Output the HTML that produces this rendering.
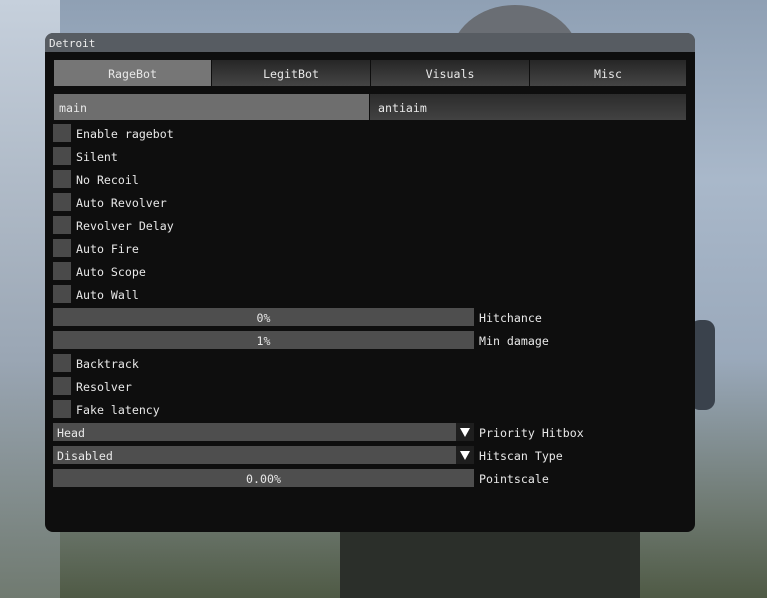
<!DOCTYPE html>
<html><head><style>
*{margin:0;padding:0;box-sizing:border-box}
body{width:767px;height:598px;overflow:hidden;position:relative;font-family:"DejaVu Sans Mono","Liberation Mono",monospace;font-size:11.6px;color:#e8e8e8;
background:linear-gradient(180deg,#8fa0b4 0%,#a9b8ca 30%,#9aa9bb 60%,#6f7a72 85%,#4f5a45 100%)}
.bg{position:absolute}
.win{position:absolute;left:45px;top:33px;width:650px;height:499px;border-radius:8px;overflow:hidden;background:#0e0e0e}
.title{height:19px;background:rgba(160,170,182,.5);padding:4px 0 0 4px;font-size:11px;color:#eee}
.abs{position:absolute}
.tab{position:absolute;top:27px;height:26px;text-align:center;line-height:28px;background:linear-gradient(#262626,#454545);}
.cb{position:absolute;left:8px;width:18px;height:18px;background:#4a4a4a}
.lbl{position:absolute;left:31px;line-height:20px}
.sl{position:absolute;left:8px;width:421px;height:18px;background:#4e4e4e;text-align:center;line-height:20px}
.sll{position:absolute;left:434px;line-height:20px}
.ar{position:absolute;left:411px;width:18px;height:18px;background:#1e1e1e}
</style></head><body>
<div class="bg" style="left:0;top:0;width:60px;height:598px;background:linear-gradient(#c6d0dc,#9aa6b4 60%,#707a70)"></div>
<div class="bg" style="left:450px;top:5px;width:130px;height:110px;border-radius:50% 50% 0 0;background:#6a6e74"></div>
<div class="bg" style="left:340px;top:520px;width:300px;height:78px;background:#2b2f2a"></div>
<div class="bg" style="left:690px;top:320px;width:25px;height:90px;background:#3a424c;border-radius:10px"></div>
<div class="win">
<div class="title">Detroit</div>
<div class="tab" style="left:9px;width:157px;background:#767676">RageBot</div>
<div class="tab" style="left:167px;width:158px">LegitBot</div>
<div class="tab" style="left:326px;width:158px">Visuals</div>
<div class="tab" style="left:485px;width:156px">Misc</div>
<div class="abs" style="left:9px;top:61px;width:315px;height:26px;background:#6e6e6e;line-height:28px;padding-left:5px">main</div>
<div class="abs" style="left:325px;top:61px;width:316px;height:26px;background:linear-gradient(#2c2c2c,#424242);line-height:28px;padding-left:8px">antiaim</div>

<div class="cb" style="top:91px"></div><div class="lbl" style="top:91px">Enable ragebot</div>
<div class="cb" style="top:114px"></div><div class="lbl" style="top:114px">Silent</div>
<div class="cb" style="top:137px"></div><div class="lbl" style="top:137px">No Recoil</div>
<div class="cb" style="top:160px"></div><div class="lbl" style="top:160px">Auto Revolver</div>
<div class="cb" style="top:183px"></div><div class="lbl" style="top:183px">Revolver Delay</div>
<div class="cb" style="top:206px"></div><div class="lbl" style="top:206px">Auto Fire</div>
<div class="cb" style="top:229px"></div><div class="lbl" style="top:229px">Auto Scope</div>
<div class="cb" style="top:252px"></div><div class="lbl" style="top:252px">Auto Wall</div>
<div class="sl" style="top:275px">0%</div><div class="sll" style="top:275px">Hitchance</div>
<div class="sl" style="top:298px">1%</div><div class="sll" style="top:298px">Min damage</div>
<div class="cb" style="top:321px"></div><div class="lbl" style="top:321px">Backtrack</div>
<div class="cb" style="top:344px"></div><div class="lbl" style="top:344px">Resolver</div>
<div class="cb" style="top:367px"></div><div class="lbl" style="top:367px">Fake latency</div>
<div class="sl" style="top:390px;width:403px;text-align:left;padding-left:4px">Head</div>
<div class="ar" style="top:390px"><svg width="18" height="18"><path d="M4 5H14L9 14Z" fill="#fff"/></svg></div>
<div class="sll" style="top:390px">Priority Hitbox</div>
<div class="sl" style="top:413px;width:403px;text-align:left;padding-left:4px">Disabled</div>
<div class="ar" style="top:413px"><svg width="18" height="18"><path d="M4 5H14L9 14Z" fill="#fff"/></svg></div>
<div class="sll" style="top:413px">Hitscan Type</div>
<div class="sl" style="top:436px">0.00%</div><div class="sll" style="top:436px">Pointscale</div>
</div>
</body></html>
